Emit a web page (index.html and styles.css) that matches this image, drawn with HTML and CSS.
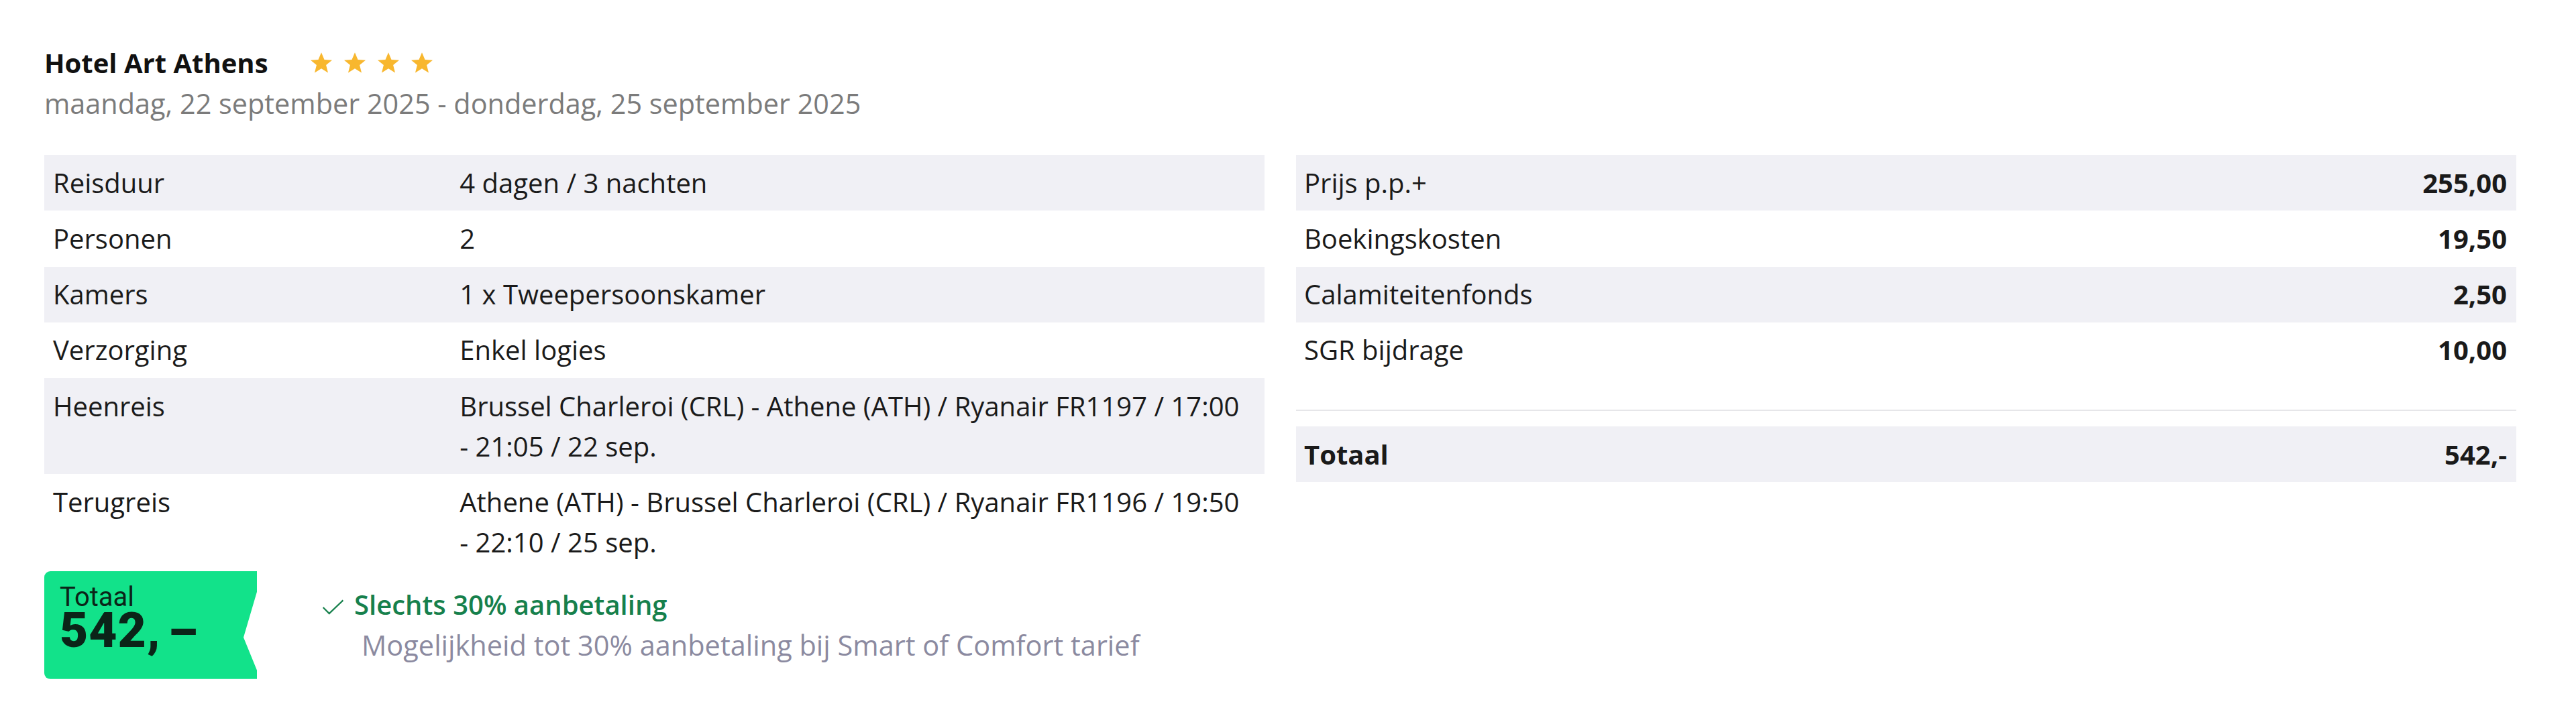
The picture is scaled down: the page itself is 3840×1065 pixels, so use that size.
FILE: index.html
```html
<!DOCTYPE html>
<html lang="nl">
<head>
<meta charset="utf-8">
<title>Hotel Art Athens</title>
<link rel="stylesheet" href="styles.css">
</head>
<body>
<div class="page">
  <header class="head">
    <div class="title-row">
      <h1 class="title">Hotel Art Athens</h1>
      <span class="stars" aria-label="4 sterren">
        <svg class="star" viewBox="0 0 34 34"><path d="M17 1.2 L21.5 12 L33 12.7 L24.1 20.1 L27 31.6 L17 25.3 L7 31.6 L9.9 20.1 L1 12.7 L12.5 12 Z"/></svg>
        <svg class="star" viewBox="0 0 34 34"><path d="M17 1.2 L21.5 12 L33 12.7 L24.1 20.1 L27 31.6 L17 25.3 L7 31.6 L9.9 20.1 L1 12.7 L12.5 12 Z"/></svg>
        <svg class="star" viewBox="0 0 34 34"><path d="M17 1.2 L21.5 12 L33 12.7 L24.1 20.1 L27 31.6 L17 25.3 L7 31.6 L9.9 20.1 L1 12.7 L12.5 12 Z"/></svg>
        <svg class="star" viewBox="0 0 34 34"><path d="M17 1.2 L21.5 12 L33 12.7 L24.1 20.1 L27 31.6 L17 25.3 L7 31.6 L9.9 20.1 L1 12.7 L12.5 12 Z"/></svg>
      </span>
    </div>
    <div class="dates">maandag, 22 september 2025 - donderdag, 25 september 2025</div>
  </header>

  <div class="cols">
    <div class="col-left">
      <table class="info">
        <tbody>
          <tr><td class="lbl">Reisduur</td><td class="val">4 dagen / 3 nachten</td></tr>
          <tr><td class="lbl">Personen</td><td class="val">2</td></tr>
          <tr><td class="lbl">Kamers</td><td class="val">1 x Tweepersoonskamer</td></tr>
          <tr><td class="lbl">Verzorging</td><td class="val">Enkel logies</td></tr>
          <tr><td class="lbl">Heenreis</td><td class="val">Brussel Charleroi (CRL) - Athene (ATH) / Ryanair FR1197 / 17:00 - 21:05 / 22 sep.</td></tr>
          <tr><td class="lbl">Terugreis</td><td class="val">Athene (ATH) - Brussel Charleroi (CRL) / Ryanair FR1196 / 19:50 - 22:10 / 25 sep.</td></tr>
        </tbody>
      </table>

      <div class="summary">
        <div class="badge">
          <div class="badge-label">Totaal</div>
          <div class="badge-amount">542,<span class="dash">-</span></div>
        </div>
        <div class="deposit">
          <div class="deposit-title">
            <svg class="check" viewBox="0 0 34 24"><polyline points="1.5,12.5 11,22 32.5,1.5"/></svg>
            <span>Slechts 30% aanbetaling</span>
          </div>
          <div class="deposit-note">Mogelijkheid tot 30% aanbetaling bij Smart of Comfort tarief</div>
        </div>
      </div>
    </div>

    <div class="col-right">
      <table class="prices">
        <tbody>
          <tr><td class="plbl">Prijs p.p.+</td><td class="pval">255,00</td></tr>
          <tr><td class="plbl">Boekingskosten</td><td class="pval">19,50</td></tr>
          <tr><td class="plbl">Calamiteitenfonds</td><td class="pval">2,50</td></tr>
          <tr><td class="plbl">SGR bijdrage</td><td class="pval">10,00</td></tr>
        </tbody>
      </table>
      <div class="sep"></div>
      <table class="prices total">
        <tbody>
          <tr><td class="plbl">Totaal</td><td class="pval">542,-</td></tr>
        </tbody>
      </table>
    </div>
  </div>
</div>
</body>
</html>
```

FILE: styles.css
```css
html, body {
  margin: 0;
  padding: 0;
  background: #ffffff;
}

body {
  font-family: "Open Sans", "Liberation Sans", sans-serif;
  color: #1a1a1a;
}

.page {
  padding: 64px 89px 0 66px;
}

.head {
  margin-bottom: 47px;
}

.title-row {
  display: flex;
  align-items: center;
  height: 60px;
}

.title {
  margin: 0;
  font-size: 40px;
  font-weight: 700;
  line-height: 60px;
  color: #111111;
}

.stars {
  display: flex;
  gap: 16px;
  margin-left: 62px;
}

.star {
  width: 34px;
  height: 34px;
  fill: #f8b72e;
}

.dates {
  font-size: 41.4px;
  line-height: 60px;
  color: #7b7b7b;
}

.cols {
  display: grid;
  grid-template-columns: 1fr 1fr;
  gap: 47px;
  align-items: start;
}

table {
  width: 100%;
  border-collapse: collapse;
  font-size: 40px;
  line-height: 60px;
}

td {
  padding: 11.65px 13px;
  vertical-align: top;
}

tbody tr:nth-child(odd) td {
  background: #f0f0f5;
}

.info .lbl {
  width: 33.333%;
}

.info .val {
  padding-right: 16px;
}

.prices .plbl {
  padding-left: 12px;
}

.prices .pval {
  text-align: right;
  font-weight: 700;
  padding-right: 14px;
}

.prices.total .plbl {
  font-weight: 700;
}

.sep {
  height: 2px;
  background: #e6e6e9;
  margin: 47px 0 23px;
}

.summary {
  display: flex;
  align-items: center;
  margin-top: 1px;
}

.badge {
  width: 317px;
  height: 161px;
  box-sizing: border-box;
  padding: 22px 0 0 23px;
  background: #12e28a;
  border-radius: 9px 0 0 9px;
  clip-path: polygon(0 0, 100% 0, 100% 31px, calc(100% - 20px) 99px, 100% 148px, 100% 100%, 0 100%);
  color: #0b2418;
}

.badge-label {
  font-family: "Roboto", "Open Sans", sans-serif;
  font-size: 40px;
  line-height: 34px;
}

.badge-amount {
  font-family: "Roboto", "DejaVu Sans", sans-serif;
  font-weight: 900;
  font-size: 73px;
  line-height: 60px;
  letter-spacing: 1px;
  margin-top: 2px;
}

.dash {
  display: inline-block;
  transform: scaleX(1.7);
  margin-left: 18px;
}

.deposit {
  margin-left: 97px;
}

.deposit-title {
  display: flex;
  align-items: center;
  font-size: 40px;
  line-height: 60px;
  font-weight: 600;
  color: #16804c;
}

.check {
  width: 33px;
  height: 23px;
  margin-top: 6px;
  margin-right: 15px;
  fill: none;
  stroke: #16804c;
  stroke-width: 2.4;
}

.deposit-note {
  font-size: 41.5px;
  line-height: 60px;
  color: #8b8aa0;
  margin-left: 59px;
}
```
